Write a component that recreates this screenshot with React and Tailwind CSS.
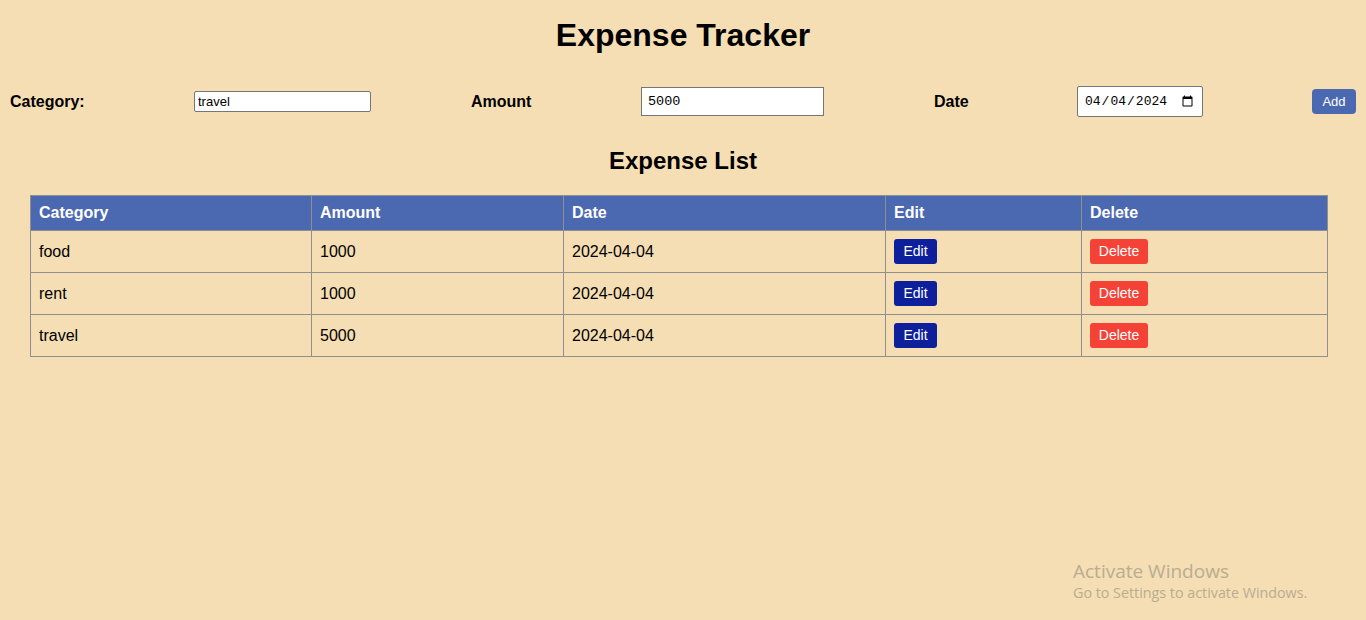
import { useState } from "react";

const rows = [
  { id: 1, category: "food", amount: 1000, date: "2024-04-04" },
  { id: 2, category: "rent", amount: 1000, date: "2024-04-04" },
  { id: 3, category: "travel", amount: 5000, date: "2024-04-04" },
];

const cell = "border border-[#8f8f8f] px-[8px] text-left";

export default function App() {
  const [category, setCategory] = useState("travel");
  const [amount, setAmount] = useState("5000");
  const [date, setDate] = useState("2024-04-04");

  return (
    <div
      className="relative min-h-[620px] bg-[#f5deb3] pt-[17px] text-black"
      style={{ fontFamily: '"Liberation Sans", Arial, sans-serif' }}
    >
      <h1 className="text-center text-[32px] font-bold leading-[37px]">Expense Tracker</h1>

      {/* form row */}
      <div className="mt-[32px] flex h-[31px] items-center px-[10px]">
        <label className="w-[184px] shrink-0 text-[16px] font-bold">Category:</label>
        <input
          type="text"
          value={category}
          onChange={(e) => setCategory(e.target.value)}
          className="h-[21px] w-[177px] shrink-0 rounded-[2px] border border-[#767676] bg-white px-[3px] text-[13px] outline-none"
        />
        <label className="ml-[100px] w-[170px] shrink-0 text-[16px] font-bold">Amount</label>
        <input
          type="text"
          value={amount}
          onChange={(e) => setAmount(e.target.value)}
          className="h-[29px] w-[183px] shrink-0 border border-[#767676] bg-white px-[6px] text-[13.5px] outline-none"
          style={{ fontFamily: '"Liberation Mono", monospace' }}
        />
        <label className="ml-[110px] w-[143px] shrink-0 text-[16px] font-bold">Date</label>
        <input
          type="date"
          value={date}
          onChange={(e) => setDate(e.target.value)}
          className="h-[31px] w-[126px] shrink-0 rounded-[2px] border border-[#767676] bg-white px-[6px] text-[13px] outline-none"
          style={{ fontFamily: '"Liberation Mono", monospace' }}
        />
        <button className="ml-[109px] h-[25px] w-[44px] shrink-0 rounded-[4px] bg-[#4b69b0] text-[13px] text-white">
          Add
        </button>
      </div>

      <h2 className="mt-[30px] text-center text-[24px] font-bold leading-[28px]">Expense List</h2>

      <div className="mt-[20px] px-[30px]">
        <table className="w-[1298px] border-collapse text-[16px]">
          <thead>
            <tr className="h-[35px] bg-[#4b69b0] text-white">
              <th className={`${cell} w-[281px] font-bold`}>Category</th>
              <th className={`${cell} w-[252px] font-bold`}>Amount</th>
              <th className={`${cell} w-[322px] font-bold`}>Date</th>
              <th className={`${cell} w-[196px] font-bold`}>Edit</th>
              <th className={`${cell} font-bold`}>Delete</th>
            </tr>
          </thead>
          <tbody>
            {rows.map((r) => (
              <tr key={r.id} className="h-[42px]">
                <td className={cell}>{r.category}</td>
                <td className={cell}>{r.amount}</td>
                <td className={cell}>{r.date}</td>
                <td className={cell}>
                  <button className="h-[25px] w-[43px] rounded-[3px] bg-[#0e1f9c] text-[14px] text-white">Edit</button>
                </td>
                <td className={cell}>
                  <button className="h-[25px] w-[58px] rounded-[3px] bg-[#f44336] text-[14px] text-white">Delete</button>
                </td>
              </tr>
            ))}
          </tbody>
        </table>
      </div>

      {/* OS watermark */}
      <div
        className="absolute left-[1073px] top-[559px] text-[#b3a88f] opacity-90"
        style={{ fontFamily: '"Open Sans", "Noto Sans", sans-serif' }}
      >
        <div className="text-[19px] leading-[24px]">Activate Windows</div>
        <div className="text-[14.3px] leading-[20px]">Go to Settings to activate Windows.</div>
      </div>
    </div>
  );
}
